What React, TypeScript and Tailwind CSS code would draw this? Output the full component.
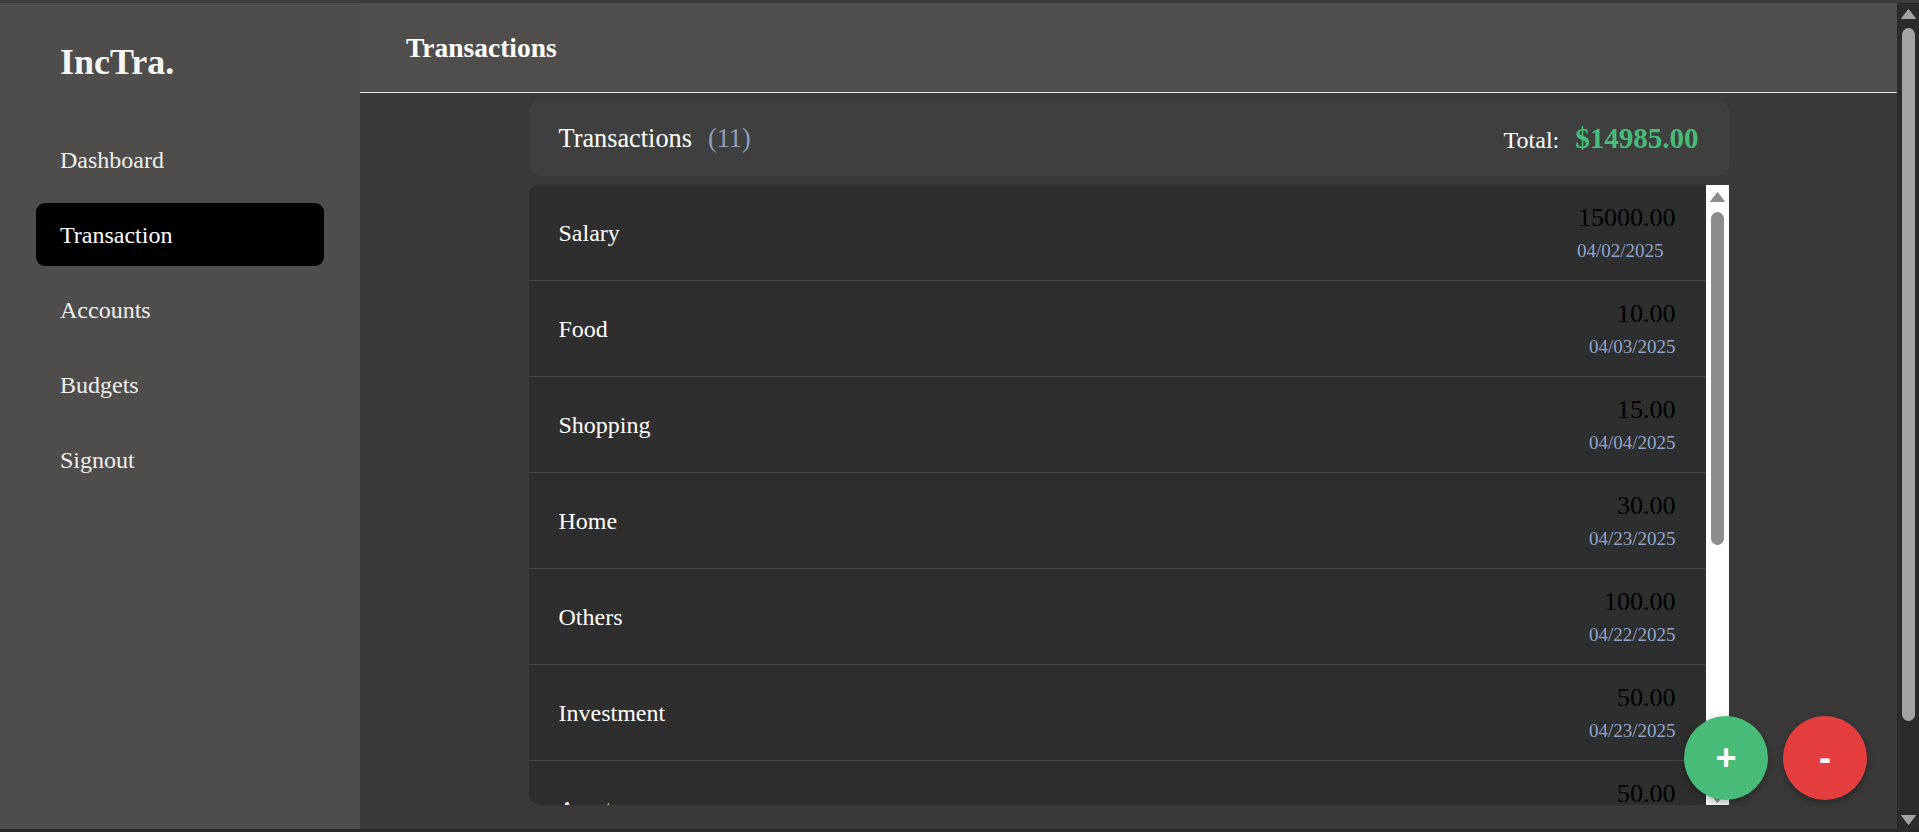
import React from "react";

const rows = [
  { name: "Salary", amount: "15000.00", date: "04/02/2025", shift: true },
  { name: "Food", amount: "10.00", date: "04/03/2025" },
  { name: "Shopping", amount: "15.00", date: "04/04/2025" },
  { name: "Home", amount: "30.00", date: "04/23/2025" },
  { name: "Others", amount: "100.00", date: "04/22/2025" },
  { name: "Investment", amount: "50.00", date: "04/23/2025" },
  { name: "Assets", amount: "50.00", date: "04/24/2025" },
  { name: "Bills", amount: "20.00", date: "04/25/2025" },
];

const nav = ["Dashboard", "Transaction", "Accounts", "Budgets", "Signout"];

function Up({ color }: { color: string }) {
  return (
    <svg width="15" height="10" viewBox="0 0 15 10">
      <polygon points="7.5,0.5 14.5,9.5 0.5,9.5" fill={color} strokeLinejoin="round" stroke={color} strokeWidth="1" />
    </svg>
  );
}
function Down({ color }: { color: string }) {
  return (
    <svg width="15" height="10" viewBox="0 0 15 10">
      <polygon points="0.5,0.5 14.5,0.5 7.5,9.5" fill={color} strokeLinejoin="round" stroke={color} strokeWidth="1" />
    </svg>
  );
}

export default function App() {
  return (
    <div className="w-[1919px] h-[832px] flex flex-col overflow-hidden font-['Liberation_Serif',serif]">
      <div className="h-[3px] bg-[#3c3c3c] shrink-0" />
      <div className="flex-1 flex min-h-0">
        <aside className="w-[360px] shrink-0 bg-[#4e4d4b] flex flex-col pt-[39px]">
          <div className="pl-[60px] text-[36px] font-bold text-[#f5f5f5] leading-[40px]">IncTra.</div>
          <nav className="mt-[46px] pl-[36px] flex flex-col gap-[12px]">
            {nav.map((n) => (
              <div
                key={n}
                className={
                  n === "Transaction"
                    ? "w-[288px] h-[63px] rounded-[9px] bg-black flex items-center pl-[24px] text-[24px] text-white"
                    : "w-[288px] h-[63px] rounded-[9px] flex items-center pl-[24px] text-[24px] text-[#f0f0f0]"
                }
              >
                {n}
              </div>
            ))}
          </nav>
        </aside>
        <main className="flex-1 relative bg-[#393939] flex flex-col min-w-0">
          <header className="h-[90px] shrink-0 bg-[#4f4e4c] border-b border-[#e5e5e5] flex items-center pl-[46px]">
            <h1 className="text-[27.5px] font-bold text-white">Transactions</h1>
          </header>
          <div className="flex-1 flex flex-col items-center pt-[8px] pb-[24px] min-h-0">
            <div className="w-[1200px] flex flex-col min-h-0 flex-1">
              <div className="h-[75px] shrink-0 rounded-[10px] bg-[#3f3f3f] flex items-center justify-between px-[30px]">
                <div className="text-[26.3px] text-white">
                  Transactions<span className="ml-[16px] text-[#8fa0b8]">(11)</span>
                </div>
                <div className="flex items-baseline gap-[16px]">
                  <span className="text-[24px] text-white">Total:</span>
                  <span className="text-[29px] font-bold text-[#48bb78]">$14985.00</span>
                </div>
              </div>
              <div className="mt-[9px] flex-1 flex min-h-0">
                <div className="flex-1 bg-[#2e2e2e] overflow-hidden rounded-l-[10px]">
                  {rows.map((r) => (
                    <div
                      key={r.name}
                      className="h-[96px] border-b border-[#454545] flex items-center justify-between px-[30px]"
                    >
                      <span className="text-[24px] text-white">{r.name}</span>
                      <div className="flex flex-col items-end">
                        <span className="text-[26px] leading-[30px] text-black">{r.amount}</span>
                        <span
                          className={
                            r.shift
                              ? "mt-[7px] mr-[12px] text-[19px] leading-[22px] text-[#8fa4c9]"
                              : "mt-[7px] text-[19px] leading-[22px] text-[#8fa4c9]"
                          }
                        >
                          {r.date}
                        </span>
                      </div>
                    </div>
                  ))}
                </div>
                <div className="w-[23px] shrink-0 bg-white flex flex-col items-center pt-[7px] pb-[2px]">
                  <Up color="#8c8c8c" />
                  <div className="mt-[10px] w-[13px] h-[333px] rounded-full bg-[#8c8c8c]" />
                  <div className="flex-1" />
                  <Down color="#8c8c8c" />
                </div>
              </div>
            </div>
          </div>
          <div className="absolute right-[30px] bottom-[29px] flex gap-[15px] font-['Liberation_Sans',sans-serif]">
            <button className="w-[84px] h-[84px] rounded-full bg-[#48bb78] text-white text-[36px] font-bold flex items-center justify-center shadow-[0_3px_8px_rgba(0,0,0,0.3)]">
              +
            </button>
            <button className="w-[84px] h-[84px] rounded-full bg-[#e53e3e] text-white text-[36px] font-bold flex items-center justify-center shadow-[0_3px_8px_rgba(0,0,0,0.3)]">
              -
            </button>
          </div>
        </main>
        <div className="w-[22px] shrink-0 bg-[#2b2b2b] flex flex-col items-center pt-[6px] pb-[4px]">
          <Up color="#a3a3a3" />
          <div className="mt-[9px] w-[13px] h-[693px] rounded-full bg-[#a3a3a3]" />
          <div className="flex-1" />
          <Down color="#a3a3a3" />
        </div>
      </div>
      <div className="h-[3px] bg-[#2a2a2a] shrink-0" />
    </div>
  );
}
